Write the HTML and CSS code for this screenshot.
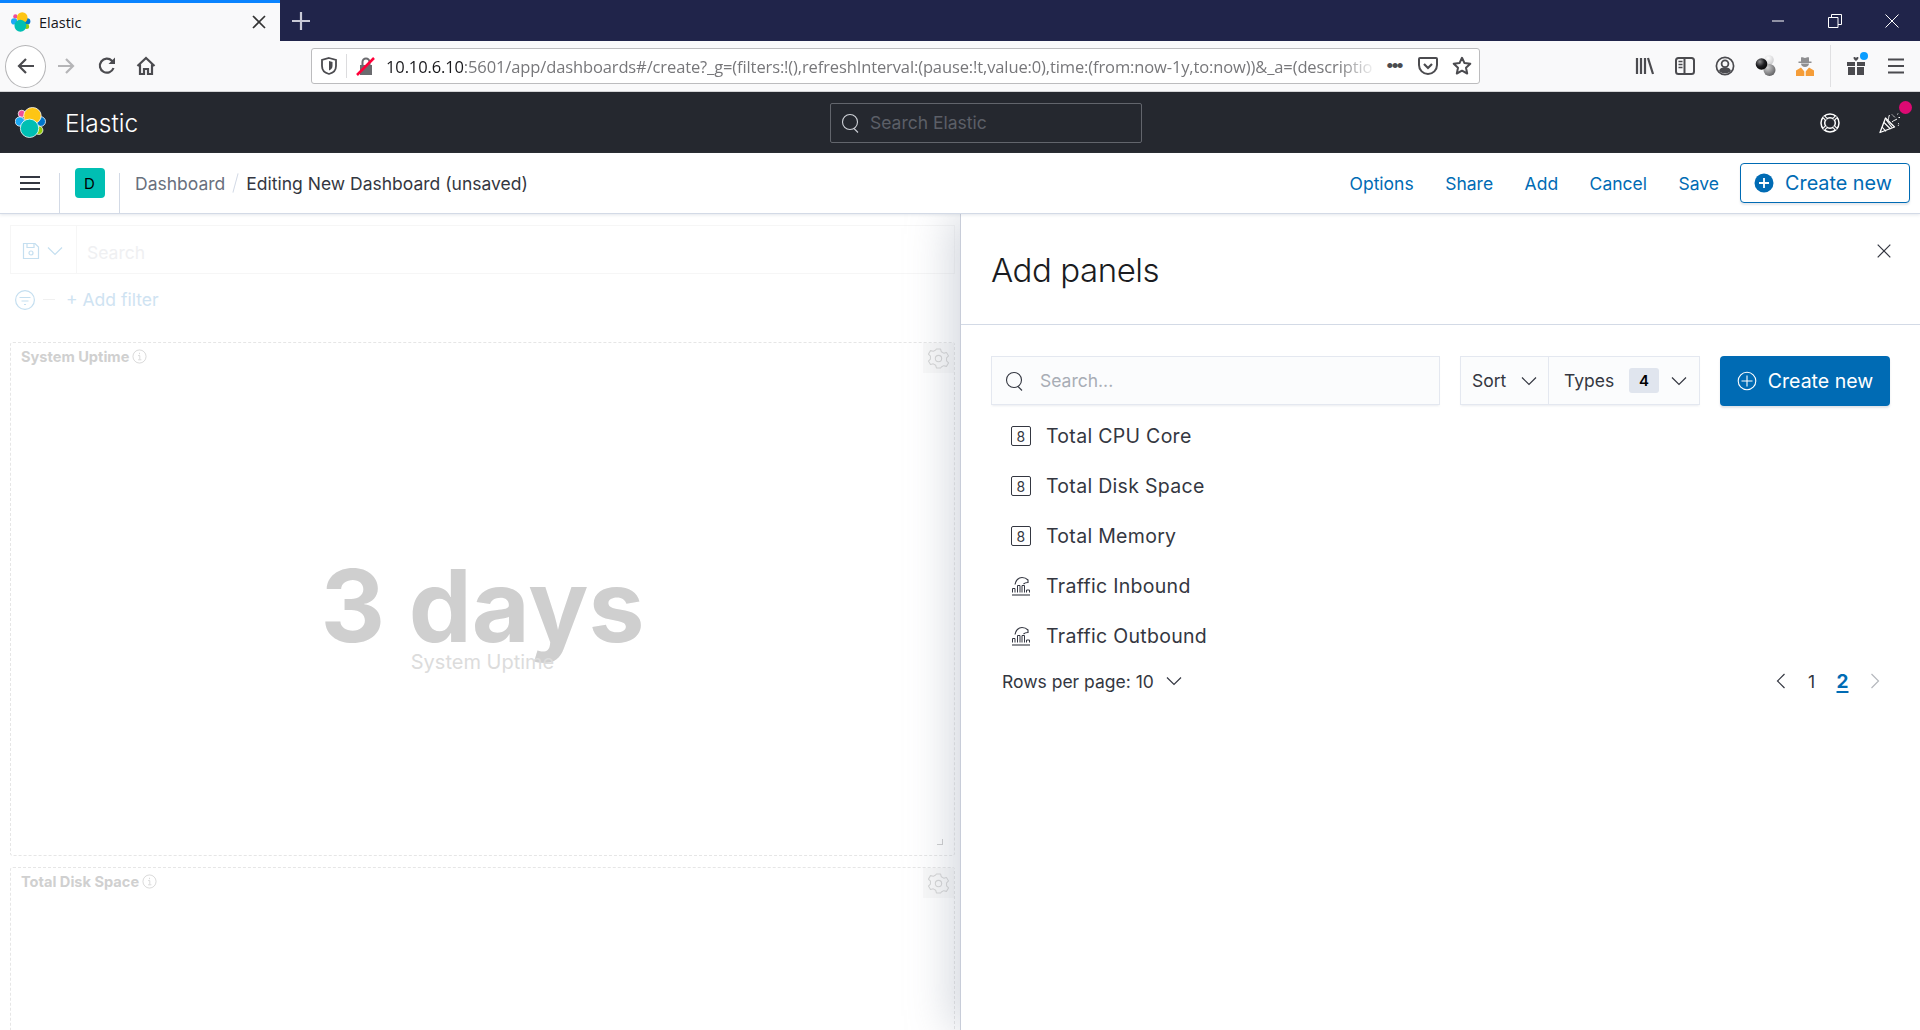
FILE: index.html
```html
<!DOCTYPE html>
<html lang="en">
<head>
<meta charset="utf-8">
<title>Elastic</title>
<link rel="stylesheet" href="styles.css">
</head>
<body>
<div class="tabbar">
  <div class="tab">
    <svg class="favicon" viewBox="0 0 32 32" width="20" height="20"><circle cx="7" cy="7" r="3.5" fill="#f04e98"/><circle cx="5" cy="15" r="5" fill="#1ba9f5"/><circle cx="26" cy="15" r="5" fill="#0077cc"/><circle cx="25" cy="23" r="4" fill="#93c90e"/><ellipse cx="18" cy="9" rx="8.5" ry="8.5" fill="#fec514"/><ellipse cx="15" cy="22" rx="9.5" ry="9.5" fill="#00bfb3"/></svg>
    <span class="tab-title">Elastic</span>
    <svg class="tab-close" viewBox="0 0 14 14" width="14" height="14"><path d="M1 1l12 12M13 1L1 13" stroke="#333" stroke-width="1.7" fill="none"/></svg>
  </div>
  <div class="newtab"><svg viewBox="0 0 18 18" width="18" height="18"><path d="M9 0v18M0 9h18" stroke="#c9cad6" stroke-width="2.2" fill="none"/></svg></div>
  <div class="winctl">
    <svg viewBox="0 0 14 14" width="14" height="14"><path d="M1 7h12" stroke="#fff" stroke-width="1"/></svg>
    <svg viewBox="0 0 14 14" width="14" height="14"><path d="M.5 3.5h9.5v10H.5zM3.5 3.5V.5h10v10H10" stroke="#fff" fill="none"/></svg>
    <svg viewBox="0 0 14 14" width="14" height="14"><path d="M.5.5l13 13M13.5.5l-13 13" stroke="#fff" fill="none"/></svg>
  </div>
</div>

<div class="toolbar">
  <div class="back"><svg viewBox="0 0 20 20" width="20" height="20"><path d="M18 10H3M10 3l-7 7 7 7" stroke="#4b4b4f" stroke-width="2.2" fill="none"/></svg></div>
  <div class="tool"><svg viewBox="0 0 20 20" width="20" height="20"><path d="M2 10h15M10 3l7 7-7 7" stroke="#b5b5b7" stroke-width="2.2" fill="none"/></svg></div>
  <div class="tool tool-reload"><svg viewBox="0 0 20 20" width="20" height="20"><path d="M16.5 12a7 7 0 1 1-1.600-7.200L17 7" stroke="#4b4b4f" stroke-width="2.200" fill="none"/><path d="M18 1.500V8h-6.500z" fill="#4b4b4f"/></svg></div>
  <div class="tool"><svg viewBox="0 0 20 20" width="20" height="20"><path d="M1.500 10L10 2l8.500 8M4 8.500V18h4v-5h4v5h4V8.500" stroke="#4b4b4f" stroke-width="2.200" fill="none"/></svg></div>
  <div class="urlbar">
    <svg class="url-shield" viewBox="0 0 16 18" width="16" height="18"><path d="M8 1l7 2v6c0 4-3 7-7 8-4-1-7-4-7-8V3z" stroke="#4b4b4f" stroke-width="1.800" fill="none"/><path d="M8 4l3.500 1v4c0 2-1.500 3.500-3.500 4.500z" fill="#4b4b4f"/></svg>
    <span class="url-sep"></span>
    <svg class="url-lock" viewBox="0 0 20 20" width="20" height="20"><path d="M4 9h12v10H4z" fill="#6b6b6f"/><path d="M6.500 9V6a3.500 3.500 0 0 1 7 0v3" stroke="#6b6b6f" stroke-width="2" fill="none"/><path d="M1 19L18 2" stroke="#ff0039" stroke-width="2.500"/></svg>
    <span class="url-text"><b class="url-host">10.10.6.10</b>:5601/app/dashboards#/create?_g=(filters:!(),refreshInterval:(pause:!t,value:0),time:(from:now-1y,to:now))&amp;_a=(descriptio</span>
    <span class="url-dots">•••</span>
    <svg class="url-ico" viewBox="0 0 20 20" width="20" height="20"><path d="M2 2h16a1 1 0 0 1 1 1v6a9 9 0 0 1-18 0V3a1 1 0 0 1 1-1z" stroke="#4b4b4f" stroke-width="2" fill="none"/><path d="M6 8l4 4 4-4" stroke="#4b4b4f" stroke-width="2.200" fill="none"/></svg>
    <svg class="url-ico" viewBox="0 0 20 20" width="20" height="20"><path d="M10 1.800l2.500 5.300 5.800.7-4.300 4 1.200 5.700L10 14.700l-5.200 2.800L6 11.800l-4.300-4 5.800-.7z" stroke="#4b4b4f" stroke-width="2" fill="none" stroke-linejoin="round"/></svg>
  </div>
  <div class="tool"><svg viewBox="0 0 20 20" width="20" height="20"><path d="M2 2v16M6 2v16M10 2v16M13 2l5 16" stroke="#4b4b4f" stroke-width="2.200" fill="none"/></svg></div>
  <div class="tool"><svg viewBox="0 0 20 20" width="20" height="20"><rect x="1" y="2" width="18" height="16" rx="2.500" stroke="#4b4b4f" stroke-width="2" fill="none"/><path d="M9.500 2v16" stroke="#4b4b4f" stroke-width="2"/><path d="M3.500 5.500h4M3.500 8.500h4M3.500 11.500h4" stroke="#4b4b4f" stroke-width="1.300"/></svg></div>
  <div class="tool"><svg viewBox="0 0 20 20" width="20" height="20"><circle cx="10" cy="10" r="8.600" stroke="#4b4b4f" stroke-width="1.700" fill="none"/><circle cx="10" cy="7.800" r="3.400" stroke="#4b4b4f" stroke-width="1.800" fill="none"/><path d="M4 15c1-3 3.300-3.400 6-3.400s5 .4 6 3.400c-1.500 1.400-3.600 2.300-6 2.300s-4.500-.9-6-2.300z" fill="#4b4b4f"/></svg></div>
  <div class="tool"><svg viewBox="0 0 24 24" width="24" height="24"><defs><radialGradient id="ballDark" cx=".35" cy=".3" r=".8"><stop offset="0" stop-color="#8a8a8c"/><stop offset=".5" stop-color="#1f1f22"/><stop offset="1" stop-color="#000"/></radialGradient><radialGradient id="ballGrey" cx=".35" cy=".3" r=".8"><stop offset="0" stop-color="#cfcfd0"/><stop offset="1" stop-color="#58585a"/></radialGradient><radialGradient id="ballLight" cx=".4" cy=".3" r=".8"><stop offset="0" stop-color="#fff"/><stop offset="1" stop-color="#c6c6c8"/></radialGradient></defs><circle cx="16" cy="6" r="4.800" fill="url(#ballLight)"/><circle cx="16.500" cy="16" r="6" fill="url(#ballGrey)"/><circle cx="8.500" cy="10" r="5.800" fill="url(#ballDark)"/></svg></div>
  <div class="tool"><svg viewBox="0 0 20 22" width="20" height="22"><path d="M3.500 6.500h13v1.500h-13z" fill="#8f8f91"/><path d="M6 7V2.500C7.500 1.800 8.500 3 10 3s2.500-1.200 4-.5V7z" fill="#8f8f91"/><path d="M6 8.500h8c0 2-1.700 3.500-4 3.500s-4-1.500-4-3.500z" fill="#8f8f91"/><path d="M1 21v-5.500L6 12.500l3.300 4V21zM19 21v-5.500L14 12.500l-3.300 4V21z" fill="#f59d38"/><path d="M6.500 12.500L10 16l3.500-3.500" stroke="#f9f9fa" stroke-width="1" fill="none"/></svg></div>
  <span class="tool-sep"></span>
  <div class="tool gift"><svg viewBox="0 0 20 20" width="20" height="20"><path d="M1 6h8v4H1zM11 6h8v4h-8zM2 11h7v8H2zM11 11h7v8h-7z" fill="#4b4b4f"/><path d="M10 5C7 3 7 1 8.500 1S10 2.500 10 2.500 10 1 11.500 1 13 3 10 5z" fill="#4b4b4f"/></svg><span class="gift-dot"></span></div>
  <div class="tool"><svg viewBox="0 0 18 18" width="18" height="18"><path d="M1 2.500h16M1 9h16M1 15.500h16" stroke="#4b4b4f" stroke-width="2.200"/></svg></div>
</div>

<header class="kbn-header">
  <svg class="kbn-logo" viewBox="0 0 32 32" width="31" height="31"><g stroke="#fff" stroke-width=".8"><circle cx="7" cy="7" r="3.700" fill="#f04e98"/><circle cx="5" cy="15" r="4.800" fill="#1ba9f5"/><circle cx="26.500" cy="15" r="5" fill="#0077cc"/><circle cx="24.500" cy="24" r="4.300" fill="#93c90e"/><ellipse cx="18" cy="9" rx="9" ry="8.500" fill="#fec514"/><ellipse cx="15" cy="22" rx="9.500" ry="9.500" fill="#00bfb3"/></g></svg>
  <span class="kbn-title">Elastic</span>
  <div class="kbn-search">
    <svg viewBox="0 0 20 20" width="20" height="20"><circle cx="9" cy="9" r="7.500" stroke="#cfd2d8" stroke-width="1.100" fill="none"/><path d="M13 15.500l4 4" stroke="#cfd2d8" stroke-width="1.100"/></svg>
    <span>Search Elastic</span>
  </div>
  <div class="kbn-right">
    <svg viewBox="0 0 20 20" width="20" height="20"><circle cx="10" cy="10" r="9" stroke="#fff" stroke-width="1.500" fill="none"/><circle cx="10" cy="10" r="5.300" stroke="#fff" stroke-width="1.500" fill="none"/><path d="M3.500 3.500l3 3M16.500 3.500l-3 3M3.500 16.500l3-3M16.500 16.500l-3-3" stroke="#fff" stroke-width="3.400"/><path d="M3.500 3.500l3 3M16.500 3.500l-3 3M3.500 16.500l3-3M16.500 16.500l-3-3" stroke="#25282f" stroke-width="1.200"/></svg>
    <div class="party">
      <svg viewBox="0 0 22 22" width="22" height="22"><path d="M1 20.500L6.500 6l9 9z" stroke="#fff" stroke-width="1.300" fill="none" stroke-linejoin="round"/><path d="M3 15l4 4.300M5 10.500l6.500 6.500M7 7.500l6 8" stroke="#fff" stroke-width="1.100" fill="none"/><path d="M9 8c1-2 .5-3.500 1.500-5M13 10c2-2 4-2 5-3" stroke="#fff" stroke-width="1" fill="none"/><path d="M13 2.500l3 3M19 1.500l-.5 1M21 5.500h-1.500M19 11c1 .5 1 2 0 3" stroke="#fff" stroke-width="1" stroke-dasharray="1.500 1" fill="none"/></svg>
      <span class="party-dot"></span>
    </div>
  </div>
</header>

<nav class="subnav">
  <div class="sub-menu"><svg viewBox="0 0 20 16" width="20" height="16"><path d="M0 2h20M0 8h20M0 14h20" stroke="#343741" stroke-width="2.200"/></svg></div>
  <div class="sub-space"><span class="avatar">D</span></div>
  <div class="crumbs">
    <span class="crumb">Dashboard</span>
    <span class="crumb-slash"></span>
    <span class="crumb-cur">Editing New Dashboard (unsaved)</span>
  </div>
  <div class="sub-links">
    <a>Options</a><a>Share</a><a>Add</a><a>Cancel</a><a>Save</a>
    <button class="btn-outline"><svg viewBox="0 0 20 20" width="20" height="20"><circle cx="10" cy="10" r="9.500" fill="#006bb4"/><path d="M10 5v10M5 10h10" stroke="#fff" stroke-width="1.800"/></svg>Create new</button>
  </div>
</nav>

<main class="main">
  <section class="dash">
    <div class="q-bar">
      <div class="q-save">
        <svg viewBox="0 0 18 18" width="18" height="18"><path d="M1.500 1.500h11.500l3.500 3.500v11.500H1.500z" stroke="#c5dff0" stroke-width="1.200" fill="none"/><path d="M5 1.500v4h7v-4" stroke="#c5dff0" stroke-width="1.200" fill="none"/><circle cx="9" cy="11" r="2" stroke="#c5dff0" stroke-width="1.200" fill="none"/></svg>
        <svg viewBox="0 0 16 10" width="16" height="10"><path d="M1 1.500l7 7 7-7" stroke="#c5dff0" stroke-width="1.200" fill="none"/></svg>
      </div>
      <span class="q-input">Search</span>
    </div>
    <div class="f-bar">
      <svg viewBox="0 0 20 20" width="20" height="20"><circle cx="10" cy="10" r="9.400" stroke="#c5dff0" stroke-width="1.200" fill="none"/><path d="M4.500 7.500h11M6.500 11h7M9 14.500h2" stroke="#c5dff0" stroke-width="1.200"/></svg>
      <span class="f-dash"></span>
      <span class="f-add">+ Add filter</span>
    </div>
    <article class="panel panel-one">
      <div class="panel-head">
        <span class="panel-title">System Uptime</span>
        <svg viewBox="0 0 16 16" width="15" height="15"><circle cx="8" cy="8" r="7" stroke="#d8d8d8" fill="none"/><path d="M6.500 7H8.300v4M6.500 11.500h3.500M8 4v1.500" stroke="#d8d8d8" fill="none"/></svg>
        <span class="gear"><svg viewBox="0 0 20 20" width="21" height="21"><path d="M8 1h4l.7 2.600 2.300 1.300 2.600-.7 2 3.400-1.900 1.900v2.700l1.900 1.900-2 3.400-2.600-.7-2.300 1.300L12 19H8l-.7-2.600-2.300-1.300-2.600.7-2-3.400 1.900-1.900V7.800L.4 5.900l2-3.400 2.600.7 2.300-1.300z" stroke="#d4d4d4" fill="none" stroke-linejoin="round"/><circle cx="10" cy="10" r="3" stroke="#d4d4d4" fill="none"/></svg></span>
      </div>
      <div class="metric">
        <div class="metric-val">3 days</div>
        <div class="metric-lab">System Uptime</div>
      </div>
      <span class="handle"></span>
    </article>
    <article class="panel panel-two">
      <div class="panel-head">
        <span class="panel-title">Total Disk Space</span>
        <svg viewBox="0 0 16 16" width="15" height="15"><circle cx="8" cy="8" r="7" stroke="#d8d8d8" fill="none"/><path d="M6.500 7H8.300v4M6.500 11.500h3.500M8 4v1.500" stroke="#d8d8d8" fill="none"/></svg>
        <span class="gear"><svg viewBox="0 0 20 20" width="21" height="21"><path d="M8 1h4l.7 2.600 2.300 1.300 2.600-.7 2 3.400-1.900 1.900v2.700l1.900 1.900-2 3.400-2.600-.7-2.300 1.300L12 19H8l-.7-2.600-2.300-1.300-2.600.7-2-3.400 1.900-1.900V7.800L.4 5.900l2-3.400 2.600.7 2.300-1.300z" stroke="#d4d4d4" fill="none" stroke-linejoin="round"/><circle cx="10" cy="10" r="3" stroke="#d4d4d4" fill="none"/></svg></span>
      </div>
    </article>
  </section>

  <aside class="flyout">
    <div class="fly-head">
      <h1>Add panels</h1>
      <svg class="fly-close" viewBox="0 0 14 14" width="14" height="14"><path d="M.7.7l12.600 12.600M13.300.7L.7 13.300" stroke="#343741" stroke-width="1.200" fill="none"/></svg>
    </div>
    <div class="fly-body">
      <div class="controls">
        <div class="f-search">
          <svg viewBox="0 0 20 20" width="20" height="20"><circle cx="9" cy="9" r="7.500" stroke="#343741" stroke-width="1.100" fill="none"/><path d="M13 15.500l4 4" stroke="#343741" stroke-width="1.100"/></svg>
          <span>Search...</span>
        </div>
        <div class="f-group">
          <div class="f-sort">Sort<svg viewBox="0 0 16 10" width="16" height="10"><path d="M1 1.500l7 7 7-7" stroke="#343741" stroke-width="1.200" fill="none"/></svg></div>
          <div class="f-types">Types<span class="badge">4</span><svg viewBox="0 0 16 10" width="16" height="10"><path d="M1 1.500l7 7 7-7" stroke="#343741" stroke-width="1.200" fill="none"/></svg></div>
        </div>
        <button class="btn-fill"><svg viewBox="0 0 20 20" width="20" height="20"><circle cx="10" cy="10" r="8.800" stroke="#fff" stroke-width="1.100" fill="none"/><path d="M10 4.500v11M4.500 10h11" stroke="#fff" stroke-width="1.100"/></svg>Create new</button>
      </div>
      <ul class="list">
        <li><span class="metric-ico">8</span>Total CPU Core</li>
        <li><span class="metric-ico">8</span>Total Disk Space</li>
        <li><span class="metric-ico">8</span>Total Memory</li>
        <li><svg class="area-ico" viewBox="0 0 20 20" width="20" height="20"><path d="M1 19h18" stroke="#343741" stroke-width="1.100"/><path d="M1.500 16.500v-4h2.500v4M6.500 16.500V9.500H9v7M11 16.500V9.500h2.500v7M15.500 16.500V14h3v2.500" stroke="#343741" stroke-width="1" fill="none"/><path d="M4 8.500C4.500 4.500 7.500 1.500 11 1.500c2.500 0 4.500.9 6 2.500v2.500c-2 0-3.500.5-4.500 1.500" stroke="#343741" stroke-width="1.100" fill="none"/></svg>Traffic Inbound</li>
        <li><svg class="area-ico" viewBox="0 0 20 20" width="20" height="20"><path d="M1 19h18" stroke="#343741" stroke-width="1.100"/><path d="M1.500 16.500v-4h2.500v4M6.500 16.500V9.500H9v7M11 16.500V9.500h2.500v7M15.500 16.500V14h3v2.500" stroke="#343741" stroke-width="1" fill="none"/><path d="M4 8.500C4.500 4.500 7.500 1.500 11 1.500c2.500 0 4.500.9 6 2.500v2.500c-2 0-3.500.5-4.500 1.500" stroke="#343741" stroke-width="1.100" fill="none"/></svg>Traffic Outbound</li>
      </ul>
      <div class="pager">
        <span class="rows">Rows per page: 10<svg viewBox="0 0 16 10" width="16" height="10"><path d="M1 1.500l7 7 7-7" stroke="#343741" stroke-width="1.200" fill="none"/></svg></span>
        <div class="pages">
          <svg viewBox="0 0 10 16" width="10" height="16"><path d="M8.500 1l-7 7 7 7" stroke="#343741" stroke-width="1.200" fill="none"/></svg>
          <span>1</span>
          <span class="page-cur">2</span>
          <svg viewBox="0 0 10 16" width="10" height="16"><path d="M1.500 1l7 7-7 7" stroke="#b5b8bd" stroke-width="1.200" fill="none"/></svg>
        </div>
      </div>
    </div>
  </aside>
</main>
</body>
</html>
```
FILE: styles.css
```css
* { box-sizing: border-box; }
html, body { margin: 0; height: 1030px; overflow: hidden; }
body { width: 1920px; display: flex; flex-direction: column; background: #fff; font-family: Inter, "Liberation Sans", sans-serif; color: #343741; }

/* browser tab strip */
.tabbar { height: 41px; flex: none; display: flex; background: #20244a; }
.tab { width: 280px; background: #f9f9fa; border-top: 3px solid #0a84ff; display: flex; align-items: center; padding: 0 14px 0 11px; }
.favicon { flex: none; }
.tab-title { margin-left: 8px; flex: 1; font: 14.500px "Open Sans", sans-serif; color: #17171a; }
.tab-close { flex: none; }
.newtab { width: 42px; display: flex; align-items: center; justify-content: center; }
.winctl { margin-left: auto; display: flex; align-items: center; gap: 43px; padding-right: 21px; }

/* browser toolbar */
.toolbar { height: 51px; flex: none; display: flex; align-items: center; padding: 0 4px 0 5px; background: #f9f9fa; border-bottom: 1px solid #d4d4d6; }
.back { width: 41px; height: 43px; flex: none; border: 1px solid #b5b5b7; border-radius: 50%; background: #fff; display: flex; align-items: center; justify-content: center; }
.tool { position: relative; width: 40px; height: 36px; flex: none; display: flex; align-items: center; justify-content: center; }
.tool-reload { padding-left: 2px; }
.tool-sep { width: 1px; height: 42px; flex: none; margin: 0 5px 0 5px; background: #e0e0e2; }
.gift-dot { position: absolute; left: 24px; top: 4px; width: 8px; height: 8px; border-radius: 50%; background: #0a9dff; }
.urlbar { flex: 1; min-width: 0; height: 36px; margin: 0 145px; display: flex; align-items: center; background: #fff; border: 1px solid #bcbcbe; border-radius: 3px; padding: 0 7px 0 9px; }
.url-shield { flex: none; }
.url-sep { width: 1px; height: 24px; flex: none; margin: 0 9px 0 9px; background: #dcdcde; }
.url-lock { flex: none; margin-right: 10px; }
.url-text { flex: 1; min-width: 0; white-space: nowrap; overflow: hidden; font: 16.500px "Open Sans", sans-serif; color: #77777a; letter-spacing: -.12px; -webkit-mask-image: linear-gradient(to right, #000 96%, transparent); mask-image: linear-gradient(to right, #000 96%, transparent); }
.url-host { font-weight: 400; color: #17171a; }
.url-dots { flex: none; margin: 0 16px 0 10px; font: 19px "Liberation Sans", sans-serif; letter-spacing: -1.500px; color: #4b4b4f; }
.url-ico { flex: none; margin-left: 14px; }
.url-dots + .url-ico { margin-left: 0; }

/* kibana header */
.kbn-header { height: 61px; flex: none; display: flex; align-items: center; padding: 0 15px; background: #25282f; }
.kbn-logo { flex: none; }
.kbn-title { width: 765px; margin-left: 19px; font-size: 24.500px; font-weight: 300; color: #fff; flex: none; }
.kbn-search { width: 312px; height: 40px; flex: none; display: flex; align-items: center; gap: 9px; padding: 0 10px; border: 1px solid #62656c; border-radius: 2px; background: #25282f; color: #5c5f67; font-size: 17.500px; }
.kbn-right { margin-left: auto; display: flex; align-items: center; gap: 39px; padding-right: 4px; }
.party { position: relative; display: flex; }
.party-dot { position: absolute; right: -11px; top: -11px; width: 13px; height: 13px; border-radius: 50%; background: #dd0a73; }

/* kibana sub navigation */
.subnav { height: 61px; flex: none; display: flex; align-items: stretch; background: #fff; border-bottom: 1px solid #d3dae6; box-shadow: 0 1px 3px rgba(152,162,179,.25); position: relative; z-index: 2; }
.sub-menu { width: 60px; display: flex; align-items: center; justify-content: center; margin: 20px 0 0; padding-bottom: 20px; border-right: 1px solid #d3dae6; }
.sub-space { width: 60px; display: flex; justify-content: center; margin-top: 20px; border-right: 1px solid #d3dae6; }
.avatar { width: 30px; height: 30px; margin-top: -5px; background: #00bfb3; border-radius: 4px; display: flex; align-items: center; justify-content: center; font-size: 15px; color: #000; }
.crumbs { display: flex; align-items: center; padding-left: 15px; font-size: 17.500px; }
.crumb { color: #69707d; }
.crumb-slash { width: 1px; height: 20px; margin: 0 10px; background: #d3dae6; transform: rotate(15deg); }
.crumb-cur { color: #343741; }
.sub-links { margin-left: auto; display: flex; align-items: center; gap: 31.500px; padding-right: 10px; font-size: 17.500px; color: #006bb4; }
.btn-outline { width: 170px; height: 40px; margin-left: -10.500px; padding: 0 4px 0 0; display: flex; align-items: center; justify-content: center; gap: 11px; font: inherit; font-size: 19.800px; color: #006bb4; background: #fff; border: 1px solid #006bb4; border-radius: 4px; box-shadow: 0 2px 2px rgba(152,162,179,.25); }

/* main */
.main { flex: 1; min-height: 0; display: flex; overflow: hidden; }
.dash { width: 960px; flex: none; padding: 11px 5px 0 10px; overflow: hidden; }
.q-bar { height: 49px; display: flex; align-items: center; border: 1px solid #f6f6f6; }
.q-save { width: 66px; height: 100%; flex: none; display: flex; align-items: center; gap: 7px; padding: 3px 0 0 11px; border-right: 1px solid #f6f6f6; }
.q-input { padding: 5px 0 0 10px; font-size: 17.500px; color: #eff0f2; }
.f-bar { height: 51px; display: flex; align-items: center; padding-left: 5px; }
.f-dash { width: 12px; height: 1px; margin: 0 11px 0 8px; background: #f0f0f0; }
.f-add { font-size: 17.500px; color: #cfe3f2; }
.panel { border: 1px dashed #e6e6e6; border-radius: 3px; position: relative; }
.panel-one { height: 514px; margin-top: 17px; display: flex; flex-direction: column; }
.panel-two { height: 300px; margin-top: 11px; }
.panel-head { height: 30px; flex: none; display: flex; align-items: center; gap: 3px; padding-left: 10px; }
.panel-title { margin-top: -3px; font-size: 14.600px; font-weight: 700; color: #d0d0d0; }
.panel-head > svg { margin-top: -3px; }
.gear { width: 31px; height: 30px; margin-left: auto; display: flex; align-items: center; justify-content: center; background: #f9f9f9; }
.metric { flex: 1; display: flex; flex-direction: column; align-items: center; padding-top: 189px; }
.metric-val { font-size: 100px; line-height: 88px; font-weight: 700; color: #cfcfcf; }
.metric-lab { font-size: 20px; color: #dcdcdc; }
.handle { position: absolute; right: 11px; bottom: 10px; width: 6px; height: 6px; border-right: 1px solid #ccc; border-bottom: 1px solid #ccc; }

/* flyout */
.flyout { flex: 1; display: flex; flex-direction: column; background: #fff; border-left: 1px solid #c8cdd9; box-shadow: -10px 0 40px rgba(152,162,179,.42); position: relative; z-index: 1; }
.fly-head { height: 111px; flex: none; display: flex; align-items: flex-start; justify-content: space-between; padding: 0 29px 0 30px; border-bottom: 1px solid #d3dae6; }
.fly-head h1 { margin: 34px 0 0; font-size: 33px; line-height: 44px; font-weight: 300; letter-spacing: -.45px; color: #1a1c21; }
.fly-close { margin-top: 30px; }
.fly-body { padding: 31px 29px 0 30px; }
.controls { height: 50px; display: flex; }
.f-search { width: 449px; height: 49px; flex: none; display: flex; align-items: center; gap: 15px; padding-left: 13px; background: #fbfcfd; border: 1px solid #e4e8f0; box-shadow: 0 2px 2px -1px rgba(152,162,179,.2); font-size: 17.500px; color: #a8adb5; }
.f-group { width: 240px; height: 49px; flex: none; margin-left: 20px; display: flex; background: #fbfcfd; border: 1px solid #e4e8f0; box-shadow: 0 2px 2px -1px rgba(152,162,179,.2); font-size: 17.500px; color: #343741; }
.f-sort { width: 88px; display: flex; align-items: center; justify-content: space-between; padding: 0 11px 0 11px; border-right: 1px solid #e4e8f0; }
.f-types { flex: 1; display: flex; align-items: center; padding: 0 12px 0 15px; }
.badge { width: 30px; height: 25px; margin: 0 12px 0 auto; display: flex; align-items: center; justify-content: center; background: #e0e5ee; border-radius: 3px; font-size: 15px; font-weight: 600; color: #000; }
.btn-fill { width: 170px; height: 50px; flex: none; margin-left: 20px; display: flex; align-items: center; justify-content: center; gap: 11px; border: 0; border-radius: 4px; background: #006bb4; box-shadow: 0 2px 2px rgba(152,162,179,.3); color: #fff; font: inherit; font-size: 19.500px; }
.list { list-style: none; margin: 5px 0 0; padding: 0 0 0 20px; }
.list li { height: 50px; display: flex; align-items: center; font-size: 19.500px; color: #343741; letter-spacing: .3px; }
.metric-ico { width: 20px; height: 20px; flex: none; margin-right: 15px; display: flex; align-items: center; justify-content: center; border: 1px solid #343741; border-radius: 2px; font-size: 14px; }
.area-ico { flex: none; margin-right: 15px; }
.pager { height: 40px; display: flex; align-items: center; justify-content: space-between; padding: 0 11px 0 11px; }
.rows { display: flex; align-items: center; gap: 12px; font-size: 17.500px; }
.pages { display: flex; align-items: center; gap: 21.500px; font-size: 17.500px; }
.page-cur { font-weight: 700; font-size: 19px; color: #006bb4; text-decoration: underline; text-decoration-thickness: 2px; text-underline-offset: 3px; }
```
